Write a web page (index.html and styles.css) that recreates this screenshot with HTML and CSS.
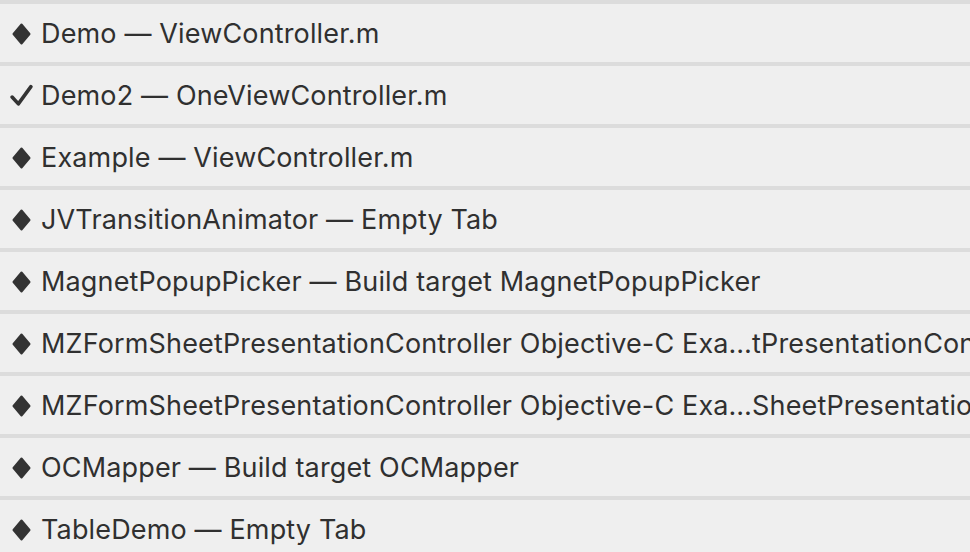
FILE: index.html
```html
<!DOCTYPE html>
<html>
<head>
<meta charset="utf-8">
<link rel="stylesheet" href="styles.css">
</head>
<body>
<ul class="menu">
  <li class="item"><span class="mark"><svg class="diamond" viewBox="0 0 19 22"><path d="M9.5 1.5 L17.5 11 L9.5 20.5 L1.5 11 Z"/></svg></span><span class="label">Demo — ViewController.m</span></li>
  <li class="item"><span class="mark"><svg class="check" viewBox="0 0 22 22"><path d="M2 12.5 L8 19 L20 2.5"/></svg></span><span class="label">Demo2 — OneViewController.m</span></li>
  <li class="item"><span class="mark"><svg class="diamond" viewBox="0 0 19 22"><path d="M9.5 1.5 L17.5 11 L9.5 20.5 L1.5 11 Z"/></svg></span><span class="label">Example — ViewController.m</span></li>
  <li class="item"><span class="mark"><svg class="diamond" viewBox="0 0 19 22"><path d="M9.5 1.5 L17.5 11 L9.5 20.5 L1.5 11 Z"/></svg></span><span class="label">JVTransitionAnimator — Empty Tab</span></li>
  <li class="item"><span class="mark"><svg class="diamond" viewBox="0 0 19 22"><path d="M9.5 1.5 L17.5 11 L9.5 20.5 L1.5 11 Z"/></svg></span><span class="label">MagnetPopupPicker — Build target MagnetPopupPicker</span></li>
  <li class="item"><span class="mark"><svg class="diamond" viewBox="0 0 19 22"><path d="M9.5 1.5 L17.5 11 L9.5 20.5 L1.5 11 Z"/></svg></span><span class="label">MZFormSheetPresentationController Objective-C Exa…tPresentationController</span></li>
  <li class="item"><span class="mark"><svg class="diamond" viewBox="0 0 19 22"><path d="M9.5 1.5 L17.5 11 L9.5 20.5 L1.5 11 Z"/></svg></span><span class="label">MZFormSheetPresentationController Objective-C Exa…SheetPresentationController</span></li>
  <li class="item"><span class="mark"><svg class="diamond" viewBox="0 0 19 22"><path d="M9.5 1.5 L17.5 11 L9.5 20.5 L1.5 11 Z"/></svg></span><span class="label">OCMapper — Build target OCMapper</span></li>
  <li class="item"><span class="mark"><svg class="diamond" viewBox="0 0 19 22"><path d="M9.5 1.5 L17.5 11 L9.5 20.5 L1.5 11 Z"/></svg></span><span class="label">TableDemo — Empty Tab</span></li>
</ul>
</body>
</html>
```
FILE: styles.css
```css
html, body {
  margin: 0;
  padding: 0;
  background: #efefef;
  overflow: hidden;
}
.menu {
  list-style: none;
  margin: 0;
  padding: 0;
  width: 970px;
  font-family: Inter, "Liberation Sans", sans-serif;
  font-size: 27px;
  letter-spacing: 0.15px;
  color: #303030;
}
.item {
  display: flex;
  align-items: center;
  height: 58px;
  border-top: 4px solid #dcdcdc;
  background: #efefef;
  white-space: nowrap;
  overflow: hidden;
}
.mark {
  flex: 0 0 41px;
  display: flex;
  align-items: center;
  padding-left: 11px;
  box-sizing: border-box;
  height: 100%;
}
.diamond {
  width: 19px;
  height: 22px;
  fill: #333;
  stroke: #333;
  stroke-width: 2;
  stroke-linejoin: round;
  margin-left: 1px;
  margin-top: 1px;
}
.check {
  width: 23px;
  height: 23px;
  fill: none;
  stroke: #333;
  stroke-width: 3.4;
  stroke-linecap: round;
  stroke-linejoin: round;
  margin-left: -1px;
}
.label {
  line-height: 1;
  padding-top: 1px;
}
```
